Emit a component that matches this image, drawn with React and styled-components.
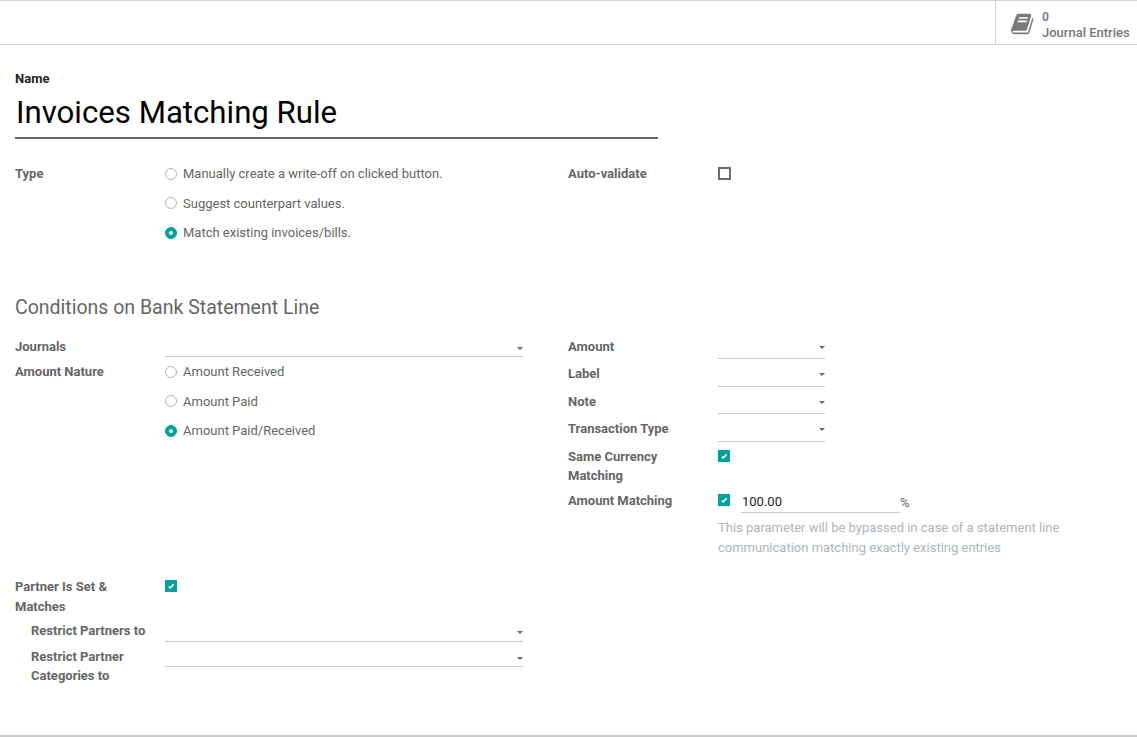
import React from 'react';
import styled, { createGlobalStyle } from 'styled-components';

const GlobalStyle = createGlobalStyle`
  html, body {
    margin: 0;
    padding: 0;
    background: #fff;
  }

  body {
    font-family: Roboto, "Noto Sans", sans-serif;
    font-size: 13px;
    line-height: 19.5px;
    color: #666;
  }
`;

const Page = styled.div`
  width: 1137px;
  height: 737px;
  display: flex;
  flex-direction: column;
  box-sizing: border-box;
  border-bottom: 2px solid #ccc;
  overflow: hidden;
`;

const TopBar = styled.div`
  height: 45px;
  flex: none;
  box-sizing: border-box;
  display: flex;
  justify-content: flex-end;
  border-top: 1px solid #ced4da;
  border-bottom: 1px solid #ced4da;
`;

const StatButton = styled.div`
  width: 142px;
  box-sizing: border-box;
  display: flex;
  align-items: center;
  gap: 7px;
  padding-left: 15px;
  border-left: 1px solid #ced4da;
`;

const BookIcon = styled.svg`
  width: 24px;
  height: 24px;
  margin-top: 3px;
  fill: #7a7a7a;
  flex: none;
`;

const StatText = styled.div`
  display: flex;
  flex-direction: column;
  padding-top: 4px;
  font-weight: 500;
  font-size: 13px;
  line-height: 16px;
  color: #777;
  white-space: nowrap;
`;

const StatValue = styled.span`
  color: #7c7bad;
  font-size: 12px;
  font-weight: 700;
`;

const Sheet = styled.div`
  padding: 24px 16px 0 15px;
  display: flex;
  flex-direction: column;
`;

const NameLabel = styled.div`
  font-weight: 700;
  color: #212529;
  height: 20px;
`;

const Title = styled.div`
  width: 642px;
  height: 48px;
  padding-left: 1px;
  font-size: 31.2px;
  line-height: 47px;
  color: #000;
  border-bottom: 2px solid #666;
`;

const Columns = styled.div`
  display: flex;
  gap: 45px;
  margin-top: ${(p) => p.$top || 0}px;
`;

const Column = styled.div`
  width: 508px;
  flex: none;
  display: flex;
  flex-direction: column;
`;

const Row = styled.div`
  display: flex;
  height: ${(p) => p.$h}px;
`;

const Label = styled.div`
  width: 150px;
  flex: none;
  box-sizing: border-box;
  font-weight: 700;
  padding-left: ${(p) => (p.$indent ? 16 : 0)}px;
  padding-right: 10px;
`;

const Value = styled.div`
  flex: 1;
  min-width: 0;
  display: flex;
  flex-direction: column;
`;

const Select = styled.div`
  width: ${(p) => p.$w || 358}px;
  height: ${(p) => p.$h || 21}px;
  box-sizing: border-box;
  display: flex;
  justify-content: flex-end;
  border-bottom: 1px solid #ccc;
`;

const Caret = styled.span`
  width: 0;
  height: 0;
  margin-top: ${(p) => p.$top || 10}px;
  border-left: 3px solid transparent;
  border-right: 3px solid transparent;
  border-top: 3px solid #666;
`;

const RadioList = styled.div`
  display: flex;
  flex-direction: column;
`;

const RadioRow = styled.div`
  display: flex;
  align-items: center;
  gap: 6px;
  height: 29.5px;
  margin-top: -5px;
  margin-bottom: 5px;
`;

const RadioDot = styled.span`
  width: 12px;
  height: 12px;
  border-radius: 50%;
  box-sizing: border-box;
  flex: none;
  display: flex;
  align-items: center;
  justify-content: center;
  background: ${(p) => (p.$on ? '#00a09d' : '#fff')};
  border: 1px solid ${(p) => (p.$on ? '#00a09d' : '#adb5bd')};
  &::after {
    content: '';
    display: ${(p) => (p.$on ? 'block' : 'none')};
    width: 4px;
    height: 4px;
    border-radius: 50%;
    background: #fff;
  }
`;

const Box = styled.span`
  width: ${(p) => (p.$on ? 12 : 13)}px;
  height: ${(p) => (p.$on ? 12 : 13)}px;
  flex: none;
  display: block;
  margin-top: 3px;
  box-sizing: border-box;
  background: ${(p) => (p.$on ? '#00a09d' : '#fff')};
  border: ${(p) => (p.$on ? '0' : '2px solid #6c6c6c')};
`;

const Tick = styled.svg`
  display: block;
  width: 12px;
  height: 12px;
  fill: none;
  stroke: #fff;
  stroke-width: 1.6;
`;

const SectionTitle = styled.div`
  font-size: 19.5px;
  line-height: 30px;
  color: #666;
  margin-top: ${(p) => p.$top}px;
`;

const MatchRow = styled.div`
  display: flex;
  align-items: flex-start;
`;

const NumberField = styled.div`
  width: 159px;
  height: 22px;
  margin-left: 11px;
  padding: 1px 0 0 1px;
  box-sizing: border-box;
  color: #212529;
  border-bottom: 1px solid #ccc;
`;

const Unit = styled.span`
  margin-top: 2px;
  font-size: 13px;
`;

const HelpText = styled.div`
  width: 380px;
  margin-top: 5px;
  line-height: 20px;
  color: #adb5bd;
`;

const Check = ({ on }) => (
  <Box $on={on}>
    {on && (
      <Tick viewBox="0 0 12 12">
        <path d="M3.8 6.6 5.2 7.8 8.6 4.4" />
      </Tick>
    )}
  </Box>
);

const Radios = ({ items, active }) => (
  <RadioList>
    {items.map((item) => (
      <RadioRow key={item}>
        <RadioDot $on={item === active} />
        {item}
      </RadioRow>
    ))}
  </RadioList>
);

const App = () => (
  <Page>
    <GlobalStyle />
    <TopBar>
      <StatButton>
        <BookIcon viewBox="0 0 1792 1792">
          <path d="M1639 478q40 57 18 129l-275 906q-19 64-76.500 107.500t-122.500 43.500h-923q-77 0-148.500-53.500t-99.500-131.500q-24-67-2-127 0-4 3-27t4-37q1-8-3-21.500t-3-19.500q2-11 8-21t16.500-23.500 16.500-23.500q23-38 45-91.500t30-91.500q3-10 .5-30t-.5-28q3-11 17-28t17-23q21-36 42-92t25-90q1-9-2.500-32t.5-28q4-13 22-30.500t22-22.500q19-26 42.500-84.500t27.500-96.500q1-8-3-25.500t-2-26.500q2-8 9-18t18-23 17-21q8-12 16.500-30.500t15-35 16-36 19.500-32 26.500-23.500 36-11.500 47.500 5.500l-1 3q38-9 51-9h761q74 0 114 56t18 130l-274 906q-36 119-71.500 153.500t-128.500 34.500h-869q-27 0-38 15-11 16-1 43 24 70 144 70h923q29 0 56-15.500t35-41.500l300-987q7-22 5-57 38 15 59 43zm-1064 2q-4 13 2 22.500t20 9.500h608q13 0 25.500-9.500t16.500-22.500l21-64q4-13-2-22.500t-20-9.500h-608q-13 0-25.500 9.500t-16.500 22.500zm-83 256q-4 13 2 22.500t20 9.500h608q13 0 25.500-9.500t16.500-22.500l21-64q4-13-2-22.500t-20-9.500h-608q-13 0-25.500 9.500t-16.500 22.500z" />
        </BookIcon>
        <StatText>
          <StatValue>0</StatValue>
          <span>Journal Entries</span>
        </StatText>
      </StatButton>
    </TopBar>

    <Sheet>
      <NameLabel>Name</NameLabel>
      <Title>Invoices Matching Rule</Title>

      <Columns $top={25}>
        <Column>
          <Row $h={100}>
            <Label>Type</Label>
            <Value>
              <Radios
                items={['Manually create a write-off on clicked button.', 'Suggest counterpart values.', 'Match existing invoices/bills.']}
                active="Match existing invoices/bills."
              />
            </Value>
          </Row>
        </Column>
        <Column>
          <Row $h={100}>
            <Label>Auto-validate</Label>
            <Value>
              <Check />
            </Value>
          </Row>
        </Column>
      </Columns>

      <SectionTitle $top={29}>Conditions on Bank Statement Line</SectionTitle>

      <Columns $top={13.5}>
        <Column>
          <Row $h={25.5}>
            <Label>Journals</Label>
            <Value>
              <Select $h={20.5}>
                <Caret />
              </Select>
            </Value>
          </Row>
          <Row $h={126}>
            <Label>Amount Nature</Label>
            <Value>
              <Radios items={['Amount Received', 'Amount Paid', 'Amount Paid/Received']} active="Amount Paid/Received" />
            </Value>
          </Row>
        </Column>
        <Column>
          <Row $h={27.5}>
            <Label>Amount</Label>
            <Value>
              <Select $w={107} $h={22.5}>
                <Caret $top={9} />
              </Select>
            </Value>
          </Row>
          <Row $h={27.5}>
            <Label>Label</Label>
            <Value>
              <Select $w={107} $h={22.5}>
                <Caret $top={9} />
              </Select>
            </Value>
          </Row>
          <Row $h={27.5}>
            <Label>Note</Label>
            <Value>
              <Select $w={107} $h={22.5}>
                <Caret $top={9} />
              </Select>
            </Value>
          </Row>
          <Row $h={27.5}>
            <Label>Transaction Type</Label>
            <Value>
              <Select $w={107} $h={22.5}>
                <Caret $top={9} />
              </Select>
            </Value>
          </Row>
          <Row $h={44.5}>
            <Label>Same Currency Matching</Label>
            <Value>
              <Check on />
            </Value>
          </Row>
          <Row $h={60}>
            <Label>Amount Matching</Label>
            <Value>
              <MatchRow>
                <Check on />
                <NumberField>100.00</NumberField>
                <Unit>%</Unit>
              </MatchRow>
              <HelpText>This parameter will be bypassed in case of a statement line communication matching exactly existing entries</HelpText>
            </Value>
          </Row>
        </Column>
      </Columns>

      <Columns $top={26}>
        <Column>
          <Row $h={44}>
            <Label>Partner Is Set &amp; Matches</Label>
            <Value>
              <Check on />
            </Value>
          </Row>
          <Row $h={25.5}>
            <Label $indent>Restrict Partners to</Label>
            <Value>
              <Select>
                <Caret />
              </Select>
            </Value>
          </Row>
          <Row $h={40}>
            <Label $indent>Restrict Partner Categories to</Label>
            <Value>
              <Select $h={20.5}>
                <Caret />
              </Select>
            </Value>
          </Row>
        </Column>
      </Columns>
    </Sheet>
  </Page>
);

export default App;
